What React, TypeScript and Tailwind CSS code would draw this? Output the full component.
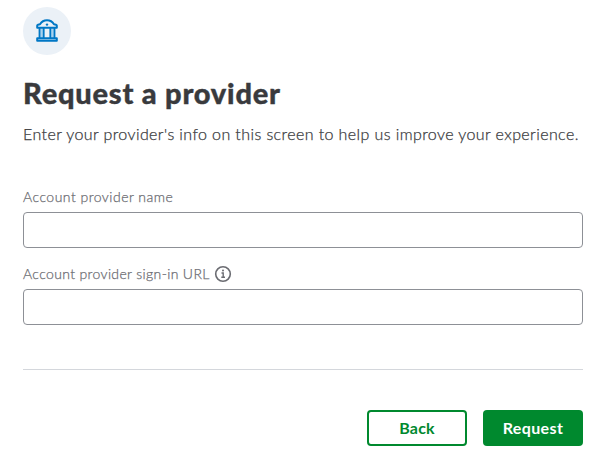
import React from "react";

function BankIcon() {
  return (
    <svg width="24" height="24" viewBox="0 0 24 24" fill="none" stroke="#0077c5" strokeWidth="2" strokeLinecap="round" strokeLinejoin="round">
      <path d="M4.6 9H8.4V19H4.6ZM15.6 9H19.4V19H15.6Z" fill="#a9d2ee" stroke="none" />
      <path d="M2.2 8.8V6.6Q2.2 5.9 3 5.7L5 5.3Q7.4 1.3 12 1.3T19 5.3L21 5.7Q21.8 5.9 21.8 6.6V8.8Z" />
      <path d="M4.5 9.5V19M8.7 9.5V19M15.3 9.5V19M19.5 9.5V19" strokeWidth="1.8" />
      <path d="M2.2 19.3H21.8V21.8H2.2Z" strokeWidth="2" />
      <circle cx="12" cy="5.6" r="1.2" fill="#0077c5" stroke="none" />
    </svg>
  );
}

function InfoIcon() {
  return (
    <svg width="18" height="18" viewBox="0 0 18 18" fill="none" stroke="#6b6c72">
      <circle cx="9" cy="9" r="7.3" strokeWidth="1.6" />
      <path d="M7.5 8H9.2V12.2M7.3 12.3H11" strokeWidth="1.4" />
      <circle cx="9" cy="5.6" r="1" fill="#6b6c72" stroke="none" />
    </svg>
  );
}

export default function App() {
  return (
    <main className="h-[458px] w-[602px] overflow-hidden bg-white pt-[7px] pl-[23px] pr-[19px] font-[Lato,sans-serif] text-[#393a3d]">
      <div className="flex size-12 items-center justify-center rounded-full bg-[#ebf1f7]">
        <BankIcon />
      </div>
      <h1 className="mt-[20px] h-9 whitespace-nowrap text-[29px] leading-9 font-black tracking-[0.78px] [-webkit-text-stroke:0.4px_#393a3d]">
        Request a provider
      </h1>
      <p className="mt-[11px] h-6 whitespace-nowrap text-[16px] leading-6 font-light tracking-[0.41px] [-webkit-text-stroke:0.25px_#393a3d]">
        Enter your provider's info on this screen to help us improve your experience.
      </p>
      <form>
        <label className="mt-[41px] flex h-5 items-center whitespace-nowrap text-[14px] leading-5 font-light tracking-[0.48px] text-[#6b6c72] [-webkit-text-stroke:0.25px_#6b6c72]">
          Account provider name
        </label>
        <input className="mt-[5px] block h-9 w-full rounded-[4px] border border-[#8d9096] outline-none" />
        <label className="mt-[16px] flex h-5 items-center gap-1 whitespace-nowrap text-[14px] leading-5 font-light tracking-[0.36px] text-[#6b6c72] [-webkit-text-stroke:0.25px_#6b6c72]">
          <span>Account provider sign-in URL</span>
          <InfoIcon />
        </label>
        <input className="mt-[5px] block h-9 w-full rounded-[4px] border border-[#8d9096] outline-none" />
        <div className="mt-[44px] flex justify-end gap-4 border-t border-[#d4d7dc] pt-[40px] text-[16px] font-bold">
          <button type="button" className="h-9 w-[100px] rounded-[4px] border-2 border-[#00892e] tracking-[0.2px] text-[#00892e]">Back</button>
          <button type="button" className="h-9 w-[100px] rounded-[4px] bg-[#00892e] tracking-[0.4px] text-white">Request</button>
        </div>
      </form>
    </main>
  );
}
